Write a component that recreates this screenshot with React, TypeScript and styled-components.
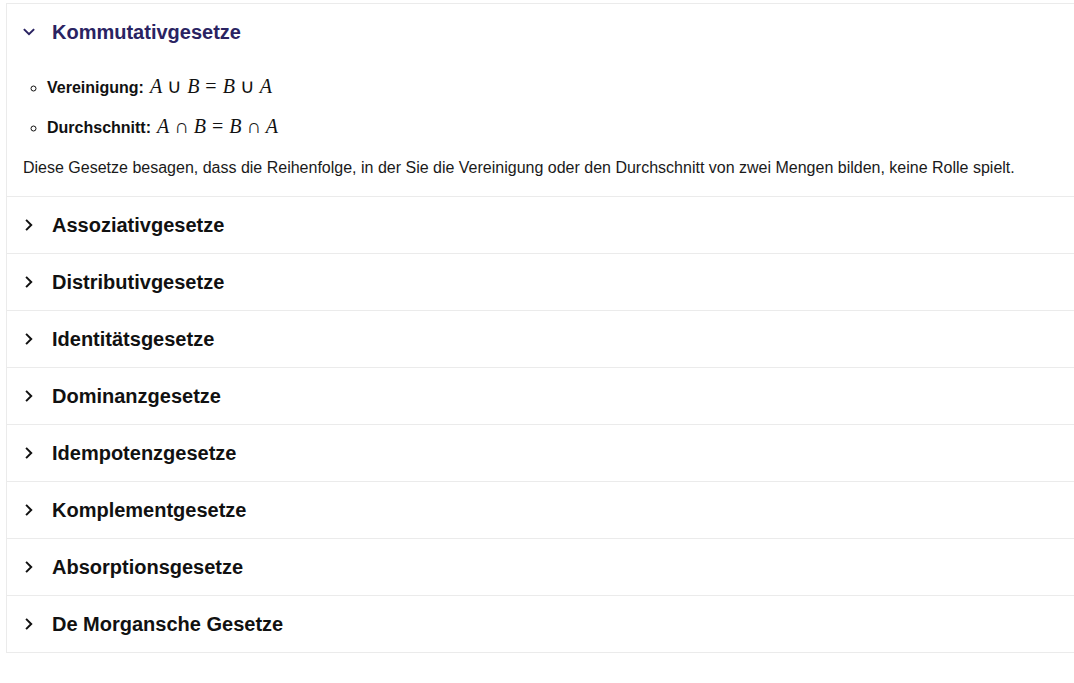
import React, { FC, useState } from "react";
import styled, { createGlobalStyle } from "styled-components";

const GlobalStyle = createGlobalStyle`
  html, body {
    margin: 0;
    padding: 0;
    background: #ffffff;
    overflow: hidden;
  }

  body {
    font-family: "Liberation Sans", Arial, sans-serif;
    color: #111111;
  }
`;

const Accordion = styled.div`
  margin: 3px 0 0 6px;
  width: calc(100% + 20px);
  border: 1px solid #ebebeb;
`;

const Section = styled.div`
  & + & {
    border-top: 1px solid #ebebeb;
  }
`;

const Header = styled.button<{ $open: boolean }>`
  all: unset;
  box-sizing: border-box;
  display: flex;
  align-items: center;
  gap: 15px;
  width: 100%;
  height: 56px;
  padding: 0 0 0 14px;
  cursor: pointer;
  color: ${(props) => (props.$open ? "#2a2362" : "#111111")};
`;

const Chevron = styled.svg<{ $open: boolean }>`
  width: 16px;
  height: 16px;
  flex: none;
  transform: rotate(${(props) => (props.$open ? "90deg" : "0deg")});
`;

const Title = styled.span`
  font-family: "Liberation Sans", Arial, sans-serif;
  font-size: 20px;
  font-weight: 700;
  line-height: 24px;
`;

const Body = styled.div`
  padding: 16px 0 16px 16px;
`;

const LawList = styled.ul`
  margin: 0;
  padding: 0 0 0 24px;
  list-style: circle;
`;

const LawItem = styled.li`
  font-size: 16px;
  line-height: 24px;
  height: 24px;
  margin-bottom: 16px;
`;

const Label = styled.strong`
  font-weight: 700;
  margin-right: 6px;
`;

const Math = styled.span`
  font-family: "Liberation Serif", "Times New Roman", serif;
  font-size: 20px;
  line-height: 1;
`;

const Var = styled.i`
  font-style: italic;
`;

const Op = styled.span<{ $rel?: boolean }>`
  margin: 0 ${(props) => (props.$rel ? "6px" : "5px")};
`;

const Note = styled.p`
  margin: 0;
  font-size: 16px;
  line-height: 24px;
  color: #1a1a1a;
`;

const ChevronIcon: FC<{ open: boolean }> = ({ open }) => (
  <Chevron $open={open} viewBox="0 0 16 16" fill="none">
    <path
      d="M5.8 3.6 L10.2 8 L5.8 12.4"
      stroke="currentColor"
      strokeWidth="2"
      strokeLinecap="square"
    />
  </Chevron>
);

const Formula: FC<{ op: string }> = ({ op }) => (
  <Math>
    <Var>A</Var>
    <Op>{op}</Op>
    <Var>B</Var>
    <Op $rel>=</Op>
    <Var>B</Var>
    <Op>{op}</Op>
    <Var>A</Var>
  </Math>
);

const titles = [
  "Kommutativgesetze",
  "Assoziativgesetze",
  "Distributivgesetze",
  "Identitätsgesetze",
  "Dominanzgesetze",
  "Idempotenzgesetze",
  "Komplementgesetze",
  "Absorptionsgesetze",
  "De Morgansche Gesetze",
];

const App: FC = () => {
  const [open, setOpen] = useState<number | null>(0);

  return (
    <>
      <GlobalStyle />
      <Accordion>
        {titles.map((title, i) => {
          const isOpen = open === i;
          return (
            <Section key={title}>
              <Header
                $open={isOpen}
                onClick={() => setOpen(isOpen ? null : i)}
              >
                <ChevronIcon open={isOpen} />
                <Title>{title}</Title>
              </Header>
              {isOpen && i === 0 && (
                <Body>
                  <LawList>
                    <LawItem>
                      <Label>Vereinigung:</Label>
                      <Formula op="∪" />
                    </LawItem>
                    <LawItem>
                      <Label>Durchschnitt:</Label>
                      <Formula op="∩" />
                    </LawItem>
                  </LawList>
                  <Note>
                    Diese Gesetze besagen, dass die Reihenfolge, in der Sie die
                    Vereinigung oder den Durchschnitt von zwei Mengen bilden,
                    keine Rolle spielt.
                  </Note>
                </Body>
              )}
            </Section>
          );
        })}
      </Accordion>
    </>
  );
};

export default App;
